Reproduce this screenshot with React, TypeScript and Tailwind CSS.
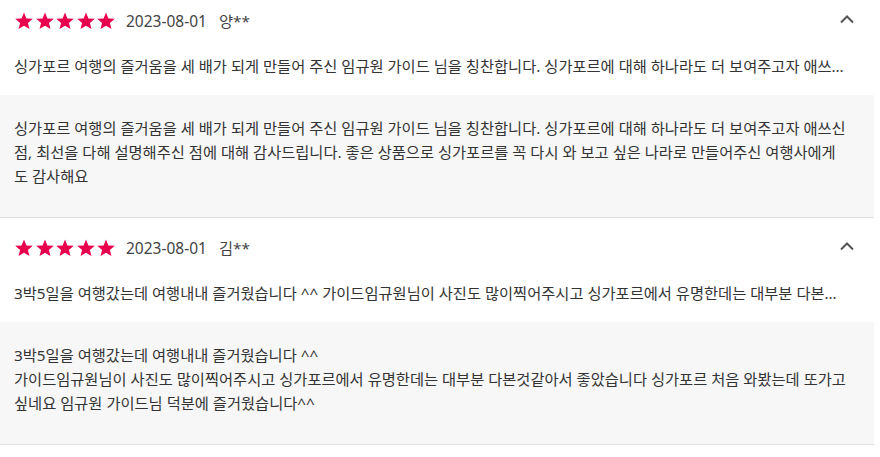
import React from "react";

type Review = {
  date: string;
  name: string;
  summary: string;
  body: string[];
};

const reviews: Review[] = [
  {
    date: "2023-08-01",
    name: "양**",
    summary:
      "싱가포르 여행의 즐거움을 세 배가 되게 만들어 주신 임규원 가이드 님을 칭찬합니다. 싱가포르에 대해 하나라도 더 보여주고자 애쓰신 점, 최선을 다해 설명해주신 점에 대해 감사드립니다.",
    body: [
      "싱가포르 여행의 즐거움을 세 배가 되게 만들어 주신 임규원 가이드 님을 칭찬합니다. 싱가포르에 대해 하나라도 더 보여주고자 애쓰신 점, 최선을 다해 설명해주신 점에 대해 감사드립니다. 좋은 상품으로 싱가포르를 꼭 다시 와 보고 싶은 나라로 만들어주신 여행사에게도 감사해요",
    ],
  },
  {
    date: "2023-08-01",
    name: "김**",
    summary:
      "3박5일을 여행갔는데 여행내내 즐거웠습니다 ^^ 가이드임규원님이 사진도 많이찍어주시고 싱가포르에서 유명한데는 대부분 다본것같아서 좋았습니다",
    body: [
      "3박5일을 여행갔는데 여행내내 즐거웠습니다 ^^",
      "가이드임규원님이 사진도 많이찍어주시고 싱가포르에서 유명한데는 대부분 다본것같아서 좋았습니다 싱가포르 처음 와봤는데 또가고 싶네요 임규원 가이드님 덕분에 즐거웠습니다^^",
    ],
  },
];

function Star() {
  return (
    <svg width="20" height="20" viewBox="0 0 24 24" className="shrink-0">
      <path
        d="M12 1.8l2.9 7.1 7.6.5-5.8 4.9 1.9 7.4L12 17.6l-6.6 4.1 1.9-7.4-5.8-4.9 7.6-.5z"
        fill="#e8004f"
      />
    </svg>
  );
}

function ReviewItem({ review, first }: { review: Review; first?: boolean }) {
  return (
    <div className={`border-b border-[#e0e0e0] ${first ? "pt-[11px]" : "pt-[20px]"}`}>
      {/* Header */}
      <div className="flex items-start justify-between pl-[14px] pr-[20px]">
        <div className="flex h-[20px] items-center">
          <div className="flex gap-[0.5px]">
            <Star />
            <Star />
            <Star />
            <Star />
            <Star />
          </div>
          <span className="ml-[10px] text-[15.5px] leading-[20px] text-[#444]">{review.date}</span>
          <span className="ml-[12px] text-[15.3px] leading-[20px] text-[#444]">{review.name}</span>
        </div>
        <svg width="14" height="9" viewBox="0 0 14 9" className="mt-[4px]">
          <path d="M1 7.5L7 1.5l6 6" fill="none" stroke="#555" strokeWidth="2" />
        </svg>
      </div>

      {/* Summary */}
      <p className="mt-[23px] truncate pl-[14px] pr-[26px] text-[15.3px] leading-[24px] text-[#333]">
        {review.summary}
      </p>

      {/* Detail */}
      <div className="mt-[17px] bg-[#f7f7f7] pb-[29px] pl-[14px] pr-[26px] pt-[21px] text-[15.3px] leading-[24px] text-[#333]">
        {review.body.map((line, i) => (
          <p key={i}>{line}</p>
        ))}
      </div>
    </div>
  );
}

export default function App() {
  return (
    <div
      className="w-[874px] bg-white"
      style={{ fontFamily: '"Noto Sans", "Noto Sans CJK KR", sans-serif' }}
    >
      {reviews.map((r, i) => (
        <ReviewItem key={i} review={r} first={i === 0} />
      ))}
    </div>
  );
}
